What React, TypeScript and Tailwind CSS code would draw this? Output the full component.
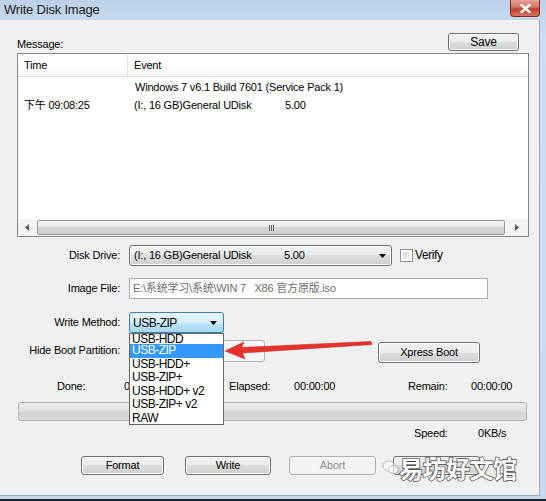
import React from "react";

const btn =
  "flex items-center justify-center rounded-[3px] border border-[#707070] bg-[linear-gradient(to_bottom,#f2f2f2_0%,#ebebeb_50%,#dddddd_50%,#cfcfcf_100%)] shadow-[inset_0_0_0_1px_#fbfbfb]";
const btnOff =
  "flex items-center justify-center rounded-[3px] border border-[#adb2b5] bg-[#f4f4f4] text-[#8d8d8d]";

function Arrow() {
  return (
    <svg width="7" height="4" viewBox="0 0 7 4" className="shrink-0">
      <path d="M0 0h7L3.5 4z" fill="#000" />
    </svg>
  );
}

function ScrollTri({ dir }: { dir: "l" | "r" }) {
  return (
    <svg width="4" height="7" viewBox="0 0 4 7">
      {dir === "l" ? <path d="M4 0v7L0 3.5z" fill="#555" /> : <path d="M0 0v7l4-3.5z" fill="#555" />}
    </svg>
  );
}

const methods = ["USB-HDD", "USB-ZIP", "USB-HDD+", "USB-ZIP+", "USB-HDD+ v2", "USB-ZIP+ v2", "RAW"];

export default function App() {
  return (
    <div className="relative w-[546px] h-[501px] overflow-hidden bg-[#1b2833] font-['Liberation_Sans','Noto_Sans_CJK_SC',sans-serif] text-[11px] tracking-[-0.2px] text-black">
      <div className="flex flex-col h-[499px] bg-[linear-gradient(to_bottom,#bcd1e9,#cddff2_40px,#c6d9ee)] pr-[6px] pb-[3px]">
        {/* title bar */}
        <div className="h-[20px] flex items-start shrink-0">
          <span className="pl-[4px] pt-[1px] text-[13px] leading-[17px] text-[#1a1a1a]">Write Disk Image</span>
          <div className="ml-auto w-[30px] h-[17px] rounded-b-[4px] border border-t-0 border-[#7d2a20] bg-[linear-gradient(to_bottom,#e8a394_0%,#d47563_45%,#c0412c_55%,#d8765d_100%)] flex items-center justify-center">
            <svg width="11" height="9" viewBox="0 0 11 9">
              <path d="M1.5 1l8 7M9.5 1l-8 7" stroke="#fff" strokeWidth="2.4" strokeLinecap="square" />
            </svg>
          </div>
        </div>

        {/* dialog body */}
        <div className="flex-1 flex flex-col bg-[#f0f0f0] border-r border-b border-[#94a9c1]">
          <div className="mt-[13px] h-[18px] flex items-end">
            <span className="pl-[17px] leading-[13px]">Message:</span>
            <div className={`ml-auto mr-[20px] w-[71px] h-[18px] text-[12px] ${btn}`}>Save</div>
          </div>

          <div className="mt-[2px] ml-[17px] w-[512px] h-[184px] border border-[#828790] bg-white flex flex-col">
            <div className="h-[23px] flex border-b border-[#e3e3e3] bg-[linear-gradient(to_bottom,#ffffff_60%,#f5f6f7)]">
              <div className="w-[110px] pl-[6px] leading-[23px] border-r border-[#e5e5e5]">Time</div>
              <div className="pl-[6px] leading-[23px]">Event</div>
            </div>
            <div className="mt-[1px] h-[18px] flex leading-[18px]">
              <div className="w-[111px]" />
              <div className="pl-[6px]">Windows 7 v6.1 Build 7601 (Service Pack 1)</div>
            </div>
            <div className="h-[18px] flex leading-[18px]">
              <div className="w-[111px] pl-[6px]">下午 09:08:25</div>
              <div className="pl-[5px] w-[156px]">(I:, 16 GB)General UDisk</div>
              <div>5.00</div>
            </div>
            <div className="flex-1" />
            <div className="h-[17px] flex items-center bg-[#f3f3f3]">
              <div className="w-[18px] h-full flex items-center justify-center">
                <ScrollTri dir="l" />
              </div>
              <div className="flex-1 mx-[1px] h-[15px] rounded-[2px] border border-[#999999] bg-[linear-gradient(to_bottom,#f3f3f3_0%,#e6e6e6_50%,#d6d6d6_50%,#cecece_100%)] flex items-center justify-center">
                <div className="flex gap-[1px]">
                  <span className="w-[1px] h-[6px] bg-[#666]" />
                  <span className="w-[1px] h-[6px] bg-[#666]" />
                  <span className="w-[1px] h-[6px] bg-[#666]" />
                </div>
              </div>
              <div className="w-[22px] h-full flex items-center justify-center">
                <ScrollTri dir="r" />
              </div>
            </div>
          </div>

          <div className="mt-[8px] h-[21px] flex items-center">
            <span className="w-[120px] text-right">Disk Drive:</span>
            <div className={`ml-[9px] w-[263px] h-[21px] ${btn} justify-start pl-[4px] pr-[5px]`}>
              <span className="w-[150px]">(I:, 16 GB)General UDisk</span>
              <span>5.00</span>
              <span className="ml-auto">
                <Arrow />
              </span>
            </div>
            <div className="ml-[8px] w-[13px] h-[13px] border border-[#8f8f8f] bg-white p-[2px]">
              <div className="w-full h-full bg-[linear-gradient(135deg,#d7d7d7,#f6f6f6)]" />
            </div>
            <span className="ml-[2px] -mt-[2px] text-[12px] tracking-[-0.4px]">Verify</span>
          </div>

          <div className="mt-[12px] h-[21px] flex items-center">
            <span className="w-[120px] text-right">Image File:</span>
            <div className="ml-[9px] w-[359px] h-[21px] border border-[#abadb3] bg-white pl-[3px] leading-[19px] text-[#6d6d6d] whitespace-pre">
              {"E:\\系统学习\\系统\\WIN 7   X86 官方原版.iso"}
            </div>
          </div>

          <div className="mt-[13px] h-[21px] flex items-center">
            <span className="w-[120px] text-right">Write Method:</span>
            <div className="ml-[9px] w-[95px] h-[21px] flex items-center rounded-[3px] border border-[#3c7fb1] bg-[linear-gradient(to_bottom,#eaf6fd_0%,#d9f0fc_50%,#bee6fd_50%,#a7d9f5_100%)] pl-[3px] pr-[6px] text-[12px] tracking-[-0.5px]">
              <span>USB-ZIP</span>
              <span className="ml-auto">
                <Arrow />
              </span>
            </div>
          </div>

          <div className="mt-[7px] h-[22px] flex items-start">
            <span className="w-[120px] text-right leading-[20px]">Hide Boot Partition:</span>
            <div className="ml-[9px] w-[136px] h-[22px] rounded-[3px] border border-[#b3b3b3] bg-[#f6f6f6]" />
            <div className={`ml-[113px] mt-[2px] w-[102px] h-[21px] ${btn}`}>Xpress Boot</div>
          </div>

          <div className="mt-[17px] h-[14px] flex items-center leading-[14px]">
            <span className="ml-[57px] w-[67px]">Done:</span>
            <span className="w-[105px]">0%</span>
            <span className="w-[65px]">Elapsed:</span>
            <span className="w-[114px]">00:00:00</span>
            <span className="w-[63px]">Remain:</span>
            <span>00:00:00</span>
          </div>

          <div className="mt-[9px] ml-[18px] w-[509px] h-[19px] rounded-[3px] border border-[#b4b4b4] bg-[linear-gradient(to_bottom,#ececec_0%,#e0e0e0_45%,#d3d3d3_55%,#dadada_100%)]" />

          <div className="mt-[5px] h-[14px] flex items-center leading-[14px]">
            <span className="ml-[414px] w-[64px]">Speed:</span>
            <span>0KB/s</span>
          </div>

          <div className="mt-[16px] h-[19px] flex">
            <div className={`ml-[81px] w-[83px] h-[19px] ${btn}`}>Format</div>
            <div className={`ml-[21px] w-[86px] h-[19px] ${btn}`}>Write</div>
            <div className={`ml-[18px] w-[87px] h-[19px] ${btnOff}`}>Abort</div>
            <div className={`ml-[17px] w-[87px] h-[19px] ${btn}`} />
          </div>
        </div>
      </div>

      {/* open dropdown list of Write Method */}
      <div className="absolute left-[129px] top-[333px] w-[95px] h-[92px] border border-[#646464] bg-white text-[12px] tracking-[-0.5px] flex flex-col overflow-hidden">
        {methods.map((m, i) => (
          <div
            key={m}
            className={
              i === 0
                ? "h-[10px] pl-[2px] leading-[10px]"
                : i === 1
                ? "h-[13.5px] pl-[2px] leading-[13.5px] bg-[#3399ff] text-white"
                : "h-[13.5px] pl-[2px] leading-[13.5px]"
            }
          >
            {m}
          </div>
        ))}
      </div>

      {/* red annotation arrow */}
      <svg className="absolute left-[222px] top-[338px]" width="156" height="24" viewBox="0 0 156 24">
        <path d="M3 13L22 4L19.5 9.5L149 3.5L150 6.5L20.5 15L23 21Z" fill="#e5332c" stroke="#c92520" strokeWidth="0.6" strokeLinejoin="round" />
      </svg>

      {/* watermark */}
      <svg className="absolute left-[382px] top-[460px] opacity-60" width="18" height="15" viewBox="0 0 18 15">
        <ellipse cx="7" cy="6" rx="6" ry="5" fill="#fff" stroke="#9a9a9a" strokeWidth="1" />
        <ellipse cx="11.5" cy="9.5" rx="5" ry="4" fill="#fff" stroke="#9a9a9a" strokeWidth="1" />
      </svg>
      <div className="absolute left-[399px] top-[453px] text-[24px] leading-[30px] tracking-[-0.5px] font-['Noto_Sans_CJK_SC',sans-serif] font-bold text-white [-webkit-text-stroke:1.3px_#505050] [paint-order:stroke_fill] [text-shadow:0_0_2px_rgba(0,0,0,0.4)]">
        易坊好文馆
      </div>
    </div>
  );
}
